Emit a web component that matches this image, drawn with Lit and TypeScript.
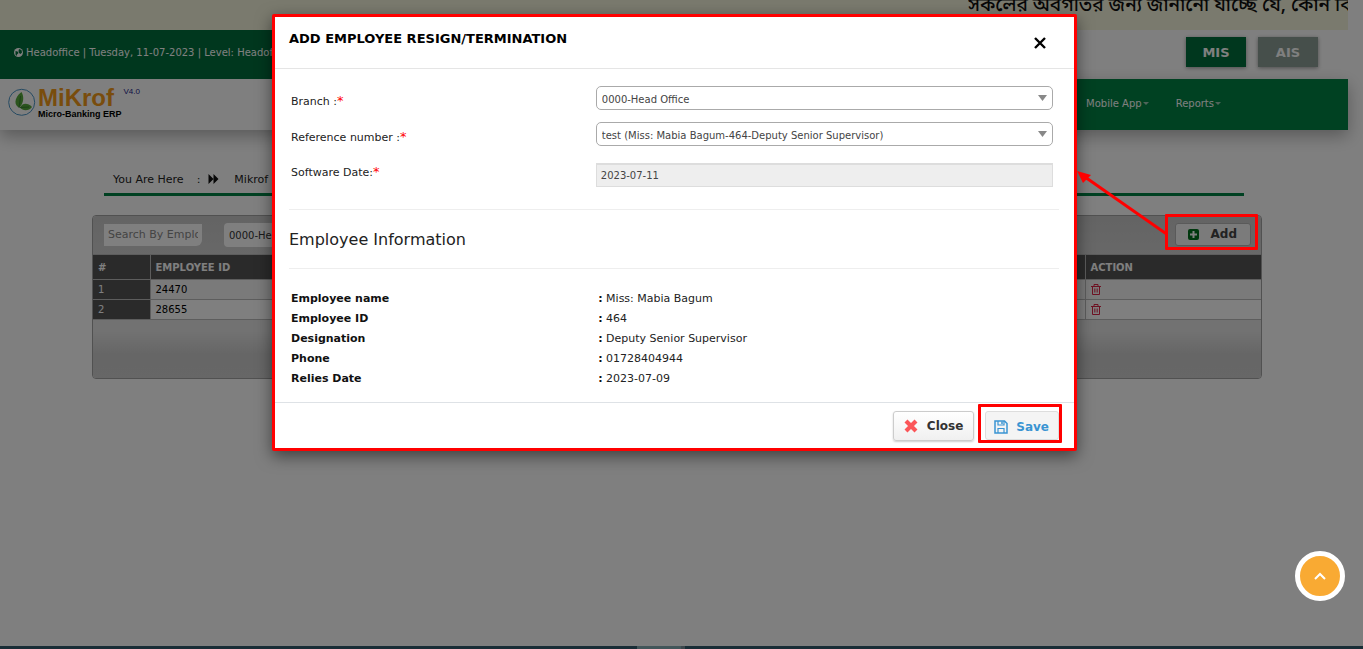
import { LitElement, html, css } from "lit";
import { customElement, state } from "lit/decorators.js";

interface Fact {
  label: string;
  value: string;
}

const facts: Fact[] = [
  { label: "Employee name", value: "Miss: Mabia Bagum" },
  { label: "Employee ID", value: "464" },
  { label: "Designation", value: "Deputy Senior Supervisor" },
  { label: "Phone", value: "01728404944" },
  { label: "Relies Date", value: "2023-07-09" },
];

const base = css`
  :host {
    display: block;
    box-sizing: border-box;
    font-family: Verdana, "DejaVu Sans", sans-serif;
  }
  *,
  *::before,
  *::after {
    box-sizing: border-box;
  }
  button,
  input,
  select {
    font: inherit;
    margin: 0;
    padding: 0;
    border: 0;
  }
  svg {
    display: block;
  }
`;

@customElement("site-header")
class SiteHeader extends LitElement {
  static styles = [
    base,
    css`
      .notice {
        height: 30px;
        background: #f5f5dc;
        overflow: hidden;
        display: flex;
        justify-content: flex-end;
      }
      .notice p {
        margin: -9px 0 0;
        width: 380px;
        white-space: nowrap;
        overflow: hidden;
        font: 500 19px/32px "Noto Sans Bengali", "Noto Sans", sans-serif;
        color: #111;
      }
      .top {
        height: 49px;
        display: flex;
        justify-content: space-between;
        background: #fff;
      }
      .where {
        width: 50%;
        padding: 0 14px 4px;
        background: #006f3c;
        color: #fff;
        font-size: 10px;
        display: flex;
        align-items: center;
        gap: 3px;
      }
      .modes {
        display: flex;
        gap: 12px;
        padding: 7px 30px 12px 0;
      }
      .mode {
        width: 60px;
        color: #fff;
        font-size: 13px;
        font-weight: bold;
        background: #8d9f96;
        box-shadow: 0 1px 4px rgba(0, 0, 0, 0.4);
      }
      .mode.on {
        background: #006f3c;
      }
      .bar {
        height: 51px;
        display: flex;
        background: #fff;
        box-shadow: 0 6px 16px rgba(0, 0, 0, 0.3);
      }
      .brand {
        flex: 1;
        display: flex;
        padding: 8px;
        text-decoration: none;
        font-family: Arial, "Liberation Sans", sans-serif;
      }
      .words {
        margin-left: 2px;
      }
      .name {
        display: block;
        color: #f39a1a;
        font-size: 24px;
        line-height: 22px;
        font-weight: bold;
      }
      .tag {
        display: block;
        color: #000;
        font-size: 9px;
        line-height: 10px;
        font-weight: bold;
        white-space: nowrap;
      }
      .version {
        margin-left: 2px;
        font-size: 8px;
        line-height: 10px;
        color: #1d1d8c;
      }
      .menu {
        flex: 1;
        display: flex;
        justify-content: flex-end;
        align-items: center;
        gap: 27px;
        padding: 0 127px 2px 0;
        background: #008345;
      }
      .menu a {
        display: flex;
        align-items: center;
        gap: 1px;
        color: #fff;
        font-size: 10px;
        text-decoration: none;
      }
    `,
  ];

  private caret() {
    return html`<svg width="6" height="3" viewBox="0 0 6 3"><path d="M0 0h6L3 3z" fill="#9fc9b4" /></svg>`;
  }

  render() {
    return html`
      <div class="notice"><p>সকলের অবগতির জন্য জানানো যাচ্ছে যে, কোন বি</p></div>
      <div class="top">
        <div class="where">
          <svg width="9" height="9" viewBox="0 0 18 18">
            <circle cx="9" cy="9" r="9" fill="#fff" />
            <path d="M10 2l5 2 1 5-3 3-3-2-1-4zM3 6l4 1 2 3-3 3-1 3-2-3z" fill="#006f3c" />
          </svg>
          <span>Headoffice | Tuesday, 11-07-2023 | Level: Headoffice</span>
        </div>
        <div class="modes">
          <button class="mode on">MIS</button>
          <button class="mode">AIS</button>
        </div>
      </div>
      <div class="bar">
        <a class="brand" href="#">
          <svg width="28" height="30" viewBox="0 0 28 30">
            <circle cx="13.700" cy="15.300" r="13" fill="none" stroke="#4b94c4" stroke-width="1" />
            <path d="M13.500 5c3 5 2 11-2 15.500C6 19 5.500 11 13.500 5z" fill="#57a83c" />
            <path d="M12 20.500c2-5 8-5 12-.5-3 4-9 4.500-12 .5z" fill="#57a83c" />
            <path d="M12.500 9l-1.500 12M12 20.500l9-.5" fill="none" stroke="#2f7a2c" stroke-width=".8" />
          </svg>
          <span class="words"><span class="name">MiKrof</span><span class="tag">Micro-Banking ERP</span></span>
          <span class="version">V4.0</span>
        </a>
        <nav class="menu">
          <a href="#">Mobile App${this.caret()}</a>
          <a href="#">Reports${this.caret()}</a>
        </nav>
      </div>
    `;
  }
}

@customElement("resign-list")
class ResignList extends LitElement {
  static styles = [
    base,
    css`
      .wrap {
        max-width: 1140px;
        margin: 0 auto;
        padding-top: 38px;
      }
      .crumbs {
        display: flex;
        align-items: center;
        height: 28px;
        padding: 0 9px 3px;
        border-bottom: 3px solid #008345;
        font-size: 11px;
        color: #222;
      }
      .colon {
        margin: 0 8px 0 13px;
      }
      .crumbs a {
        margin-left: 15px;
        color: #222;
        text-decoration: none;
      }
      .panel {
        margin: 19px -18px 0 -12px;
        border: 1px solid #a2a2a2;
        border-radius: 4px;
      }
      .tools {
        height: 38px;
        display: flex;
        align-items: center;
        padding: 0 10px 0 11px;
        background: linear-gradient(#c8c8c8, #d0d0d0);
        border-radius: 3px 3px 0 0;
      }
      .find {
        width: 98px;
        height: 22px;
        padding: 0 4px 2px;
        background: #fff;
        border-radius: 0 0 6px 0;
        font-size: 11px;
      }
      .find::placeholder {
        color: #888;
      }
      .branch {
        appearance: none;
        width: 180px;
        height: 24px;
        margin-left: 22px;
        padding: 0 5px;
        background: #fff;
        border-radius: 4px;
        font-size: 10px;
        color: #333;
      }
      .target {
        position: relative;
        margin-left: auto;
        padding-bottom: 2px;
      }
      .add {
        width: 76px;
        height: 23px;
        display: flex;
        align-items: center;
        justify-content: space-between;
        padding: 0 13px 0 12px;
        border: 1px solid #b5b5b5;
        border-radius: 3px;
        background: #f6f6f6;
        color: #444;
        font-size: 12px;
        font-weight: bold;
      }
      .callout {
        position: absolute;
        z-index: 3;
        inset: -9px -7px -2px -10px;
        border: 3px solid #f00;
        border-radius: 1px;
        pointer-events: none;
      }
      .callout svg {
        position: absolute;
        right: 100%;
        top: -46px;
      }
      table {
        width: 100%;
        border-collapse: collapse;
        table-layout: fixed;
        font-size: 10px;
        text-align: left;
        color: #000;
      }
      th,
      td {
        height: 20px;
        padding: 0 5px;
        border: 1px solid #bbb;
        background: #fff;
      }
      td:first-child,
      th:first-child {
        border-left: 0;
      }
      td:last-child,
      th:last-child {
        border-right: 0;
      }
      thead th {
        height: 25px;
        background: #555;
        color: #fff;
      }
      tbody th {
        background: #555;
        color: #fff;
        font-weight: normal;
      }
      tbody tr:first-child td {
        background: #f4f4f4;
      }
      .no {
        width: 57px;
      }
      .act {
        width: 176px;
      }
      .trash {
        display: block;
        background: none;
      }
      .pager {
        height: 58px;
        background: linear-gradient(#e4e4e4 20%, #ccc 60%, #cecece);
        border-radius: 0 0 3px 3px;
      }
    `,
  ];

  private trash() {
    return html`<button class="trash" aria-label="Delete">
      <svg width="10" height="11" viewBox="0 0 10 11" fill="none" stroke="#dc2546">
        <path d="M0 2.500h10M3 2V.5h4V2M1.500 3v7.500h7V3" />
        <path d="M3.500 4.500v4M5 4.500v4M6.500 4.500v4" stroke-width=".7" />
      </svg>
    </button>`;
  }

  render() {
    return html`
      <div class="wrap">
        <nav class="crumbs">
          <span>You Are Here</span><span class="colon">:</span>
          <svg width="11" height="10" viewBox="0 0 10 10"><path d="M0 0l5 5V0l5 5-5 5V5l-5 5z" fill="#111" /></svg>
          <a href="#">Mikrof</a>
        </nav>
        <section class="panel">
          <div class="tools">
            <input class="find" aria-label="Search by employee" placeholder="Search By Employee" />
            <select class="branch" aria-label="Branch filter"><option>0000-Head Office</option></select>
            <div class="target">
              <button class="add">
                <svg width="11" height="11" viewBox="0 0 11 11">
                  <rect width="11" height="11" rx="2" fill="#00701c" />
                  <path d="M5.500 2v7M2 5.500h7" stroke="#fff" stroke-width="2" />
                </svg>
                Add
              </button>
              <div class="callout">
                <svg width="91" height="66" viewBox="0 0 91 66">
                  <path d="M91 64L8 6" stroke="#f00" stroke-width="3" fill="none" />
                  <path d="M0 0l14 4-8 8z" fill="#f00" />
                </svg>
              </div>
            </div>
          </div>
          <table>
            <thead>
              <tr><th class="no">#</th><th>EMPLOYEE ID</th><th class="act">ACTION</th></tr>
            </thead>
            <tbody>
              ${["24470", "28655"].map(
                (id, i) => html`<tr><th scope="row">${i + 1}</th><td>${id}</td><td>${this.trash()}</td></tr>`
              )}
            </tbody>
          </table>
          <div class="pager"></div>
        </section>
      </div>
    `;
  }
}

@customElement("resign-dialog")
class ResignDialog extends LitElement {
  static styles = [
    base,
    css`
      :host {
        width: 805px;
        max-width: 100%;
      }
      .box {
        border: 3px solid #f00;
        border-radius: 2px;
        background: #fff;
        box-shadow: 0 5px 16px rgba(0, 0, 0, 0.5);
        color: #222;
        font-size: 11px;
      }
      header {
        display: flex;
        justify-content: space-between;
        height: 52px;
        padding: 14px 28px 0 14px;
        border-bottom: 1px solid #e5e5e5;
      }
      h2 {
        margin: 0;
        font-size: 13px;
        line-height: 16px;
        color: #000;
      }
      .x {
        align-self: flex-start;
        margin-top: 6px;
        background: none;
      }
      .body {
        padding: 17px 15px 13px 14px;
      }
      .row {
        display: grid;
        grid-template-columns: 2fr 3fr;
        column-gap: 2px;
        padding: 0 6px 12px 0;
      }
      .row:nth-child(2) {
        padding-bottom: 17px;
      }
      .row:nth-child(3) {
        padding-bottom: 22px;
      }
      .row label {
        height: 24px;
        padding: 8px 0 0 2px;
        line-height: 16px;
      }
      .row:nth-child(3) label {
        padding-top: 2px;
      }
      .must {
        color: #f00;
        font-size: 13px;
        line-height: 12px;
      }
      .pick {
        position: relative;
      }
      .pick svg {
        position: absolute;
        right: 6px;
        top: 9px;
        pointer-events: none;
      }
      select,
      input {
        display: block;
        appearance: none;
        width: 100%;
        height: 24px;
        font-size: 10px;
        color: #444;
      }
      select {
        padding: 2px 5px 0;
        border: 1px solid #aaa;
        border-radius: 5px;
        background: #fff;
      }
      input {
        padding: 0 4px;
        border: 1px solid #ddd;
        border-top-width: 2px;
        background: #eee;
      }
      h3 {
        margin: 0;
        padding: 20px 0 18px;
        border: solid #eee;
        border-width: 1px 0;
        font-size: 16px;
        line-height: 20px;
        font-weight: normal;
      }
      dl {
        display: grid;
        grid-template-columns: 2fr 3fr;
        margin: 20px 0 0;
        padding: 0 0 0 2px;
        line-height: 20px;
      }
      dt,
      b {
        font-weight: bold;
        color: #111;
      }
      dd {
        margin: 0;
      }
      footer {
        display: flex;
        justify-content: flex-end;
        gap: 4px;
        padding: 1px 12px 5px;
        border-top: 1px solid #dee2e6;
      }
      .act {
        height: 30px;
        display: flex;
        align-items: center;
        gap: 9px;
        border: 1px solid #ccc;
        border-radius: 3px;
        background: linear-gradient(#fff, #f0f0f0);
        font-size: 12px;
        font-weight: bold;
        color: #333;
      }
      .close {
        margin-top: 7px;
        padding: 0 10px;
        box-shadow: 0 1px 2px rgba(0, 0, 0, 0.2);
      }
      .frame {
        border: 3px solid #f00;
        border-radius: 1px;
        padding: 4px 0 0 4px;
        height: 39px;
      }
      .save {
        height: 29px;
        padding: 2px 9px 0 8px;
        gap: 8px;
        border-color: #ddd;
        background: #f4f4f4;
        color: #3a94d2;
      }
    `,
  ];

  private pick(id: string, label: string, option: string) {
    return html`<div class="row">
      <label for=${id}>${label}<span class="must">*</span></label>
      <div class="pick">
        <select id=${id}><option>${option}</option></select>
        <svg width="9" height="6" viewBox="0 0 9 6"><path d="M0 0h9L4.500 6z" fill="#888" /></svg>
      </div>
    </div>`;
  }

  private shut() {
    this.dispatchEvent(new CustomEvent("shut"));
  }

  render() {
    return html`
      <div class="box" role="dialog" aria-labelledby="title">
        <header>
          <h2 id="title">ADD EMPLOYEE RESIGN/TERMINATION</h2>
          <button class="x" aria-label="Close dialog" @click=${this.shut}>
            <svg width="12" height="12" viewBox="0 0 12 12">
              <path d="M1 1l10 10M11 1L1 11" stroke="#000" stroke-width="2.400" />
            </svg>
          </button>
        </header>
        <div class="body">
          ${this.pick("branch", "Branch :", "0000-Head Office")}
          ${this.pick("ref", "Reference number :", "test (Miss: Mabia Bagum-464-Deputy Senior Supervisor)")}
          <div class="row">
            <label for="date">Software Date:<span class="must">*</span></label>
            <input id="date" value="2023-07-11" readonly />
          </div>
          <h3>Employee Information</h3>
          <dl>
            ${facts.map((f) => html`<dt>${f.label}</dt><dd><b>:</b> ${f.value}</dd>`)}
          </dl>
        </div>
        <footer>
          <button class="act close" @click=${this.shut}>
            <svg width="14" height="14" viewBox="0 0 14 14">
              <path d="M2 2l10 10M12 2L2 12" stroke="#fb5558" stroke-width="4.200" />
            </svg>
            Close
          </button>
          <div class="frame">
            <button class="act save">
              <svg width="14" height="14" viewBox="0 0 14 14" fill="none" stroke="#3a94d2">
                <path d="M1 1h9.500L13 3.500V13H1z" stroke-width="1.500" />
                <path d="M4 1v4h6V1M4 13V8.500h6V13" stroke-width="1.200" />
                <path d="M8 1.500v2.500" stroke-width="1.500" />
              </svg>
              Save
            </button>
          </div>
        </footer>
      </div>
    `;
  }
}

@customElement("app-root")
class AppRoot extends LitElement {
  static styles = [
    base,
    css`
      :host {
        position: relative;
        min-height: 100vh;
        padding-right: 15px;
        background: #fff;
        overflow: hidden;
      }
      .shade {
        position: absolute;
        inset: 0;
        z-index: 2;
        display: flex;
        justify-content: center;
        align-items: flex-start;
        padding: 14px 14px 0 0;
        background: rgba(0, 0, 0, 0.5);
      }
      .up {
        position: absolute;
        z-index: 4;
        right: 18px;
        bottom: 48px;
        width: 50px;
        height: 50px;
        display: grid;
        place-items: center;
        border: 5px solid #fff;
        border-radius: 50%;
        background: #f9aa33;
      }
      .taskbar {
        position: absolute;
        z-index: 4;
        left: 0;
        right: 0;
        bottom: 0;
        height: 3px;
        display: flex;
        justify-content: center;
        background: #192d36;
      }
      .task {
        width: 48px;
        margin-right: 41px;
        border-right: 4px solid #3c474c;
        background: #43565a;
      }
    `,
  ];

  @state() private open = true;

  render() {
    return html`
      <site-header></site-header>
      <resign-list></resign-list>
      ${this.open
        ? html`<div class="shade"><resign-dialog @shut=${() => (this.open = false)}></resign-dialog></div>`
        : null}
      <button class="up" aria-label="Back to top">
        <svg width="12" height="8" viewBox="0 0 12 8">
          <path d="M1 7l5-5 5 5" fill="none" stroke="#fff" stroke-width="2" />
        </svg>
      </button>
      <div class="taskbar"><div class="task"></div></div>
    `;
  }
}
